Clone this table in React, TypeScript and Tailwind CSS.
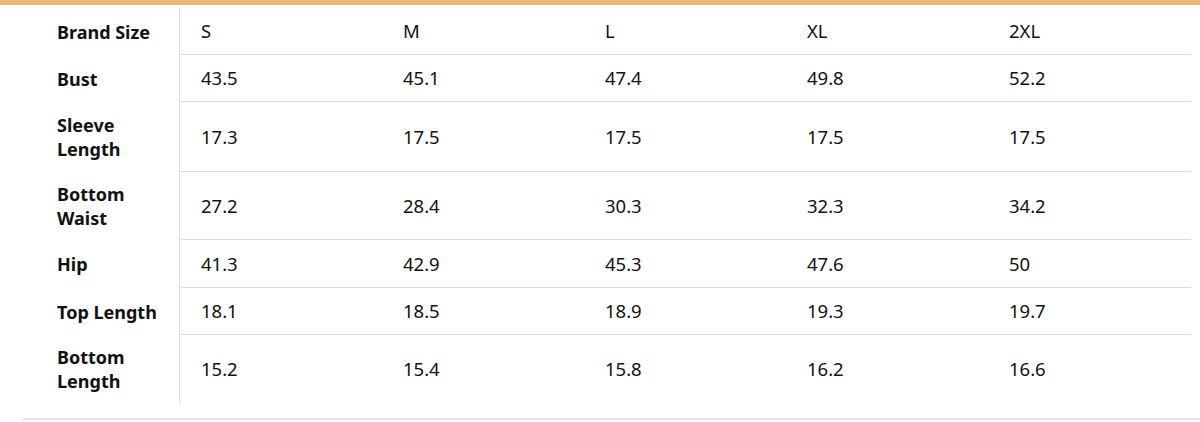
const sizes = ["S", "M", "L", "XL", "2XL"];

const rows: { label: string[]; values: string[]; h: string }[] = [
  { label: ["Bust"], values: ["43.5", "45.1", "47.4", "49.8", "52.2"], h: "h-[47px]" },
  { label: ["Sleeve", "Length"], values: ["17.3", "17.5", "17.5", "17.5", "17.5"], h: "h-[70px]" },
  { label: ["Bottom", "Waist"], values: ["27.2", "28.4", "30.3", "32.3", "34.2"], h: "h-[68px]" },
  { label: ["Hip"], values: ["41.3", "42.9", "45.3", "47.6", "50"], h: "h-[48px]" },
  { label: ["Top Length"], values: ["18.1", "18.5", "18.9", "19.3", "19.7"], h: "h-[47px]" },
  { label: ["Bottom", "Length"], values: ["15.2", "15.4", "15.8", "16.2", "16.6"], h: "h-[68px]" },
];

function Row({ label, values, h, last }: { label: string[]; values: string[]; h: string; last?: boolean }) {
  return (
    <div className={`flex ${h}`}>
      <div className="w-[179px] shrink-0 pl-[57px] flex flex-col justify-center font-bold text-[18px] leading-[24px] text-[#111]">
        {label.map((l) => (
          <span key={l}>{l}</span>
        ))}
      </div>
      <div className={`flex w-[1012px] border-l border-[#dcdcdc] ${last ? "" : "border-b"}`}>
        {values.map((v, i) => (
          <div key={i} className="w-[202px] shrink-0 pl-[21px] flex items-center text-[18.5px]">
            {v}
          </div>
        ))}
      </div>
    </div>
  );
}

export default function App() {
  return (
    <div className="w-[1200px] h-[422px] bg-white text-[#111] font-['Noto_Sans',sans-serif]">
      <div className="h-[5px] bg-[#ecb87b]" />
      <div className="pt-[3px]">
        <Row label={["Brand Size"]} values={sizes} h="h-[47px]" />
        {rows.map((r, i) => (
          <Row key={i} {...r} last={i === rows.length - 1} />
        ))}
      </div>
      <div className="mt-[15px] ml-[23px] h-[2px] bg-[#e4e4e4]" />
    </div>
  );
}
